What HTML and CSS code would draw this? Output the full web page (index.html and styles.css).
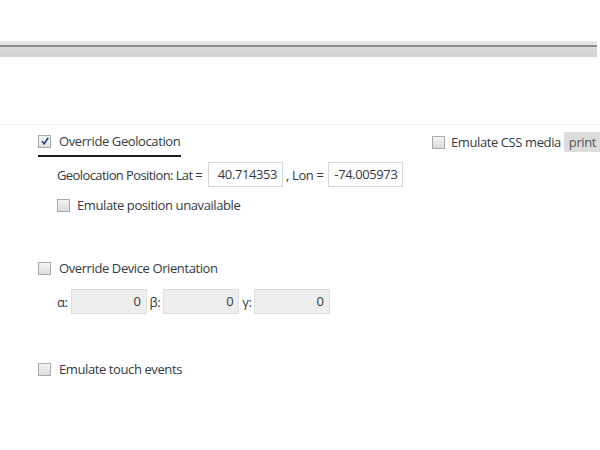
FILE: index.html
```html
<!DOCTYPE html>
<html>
<head>
<meta charset="utf-8">
<link rel="stylesheet" href="styles.css">
</head>
<body>
<div class="top-gap"></div>
<div class="bar"></div>
<div class="spacer"></div>
<div class="panel">
  <div class="main">
    <div class="row head">
      <span class="cb checked"><svg width="10" height="10" viewBox="0 0 10 10"><path d="M2 5.2 L4.2 7.6 L8.2 1.8" fill="none" stroke="#2b3a8f" stroke-width="1.6"/></svg></span>
      <span class="label">Override Geolocation</span>
    </div>
    <div class="underline"></div>
    <div class="row sub">
      <span class="label tight">Geolocation Position: Lat =</span>
      <span class="input lat">40.714353</span>
      <span class="label">, Lon =</span>
      <span class="input lon">-74.005973</span>
    </div>
    <div class="row sub2">
      <span class="cb"></span>
      <span class="label">Emulate position unavailable</span>
    </div>
    <div class="row head orient">
      <span class="cb"></span>
      <span class="label">Override Device Orientation</span>
    </div>
    <div class="row sub angles">
      <span class="label">α:</span>
      <span class="input gray">0</span>
      <span class="label">β:</span>
      <span class="input gray">0</span>
      <span class="label">γ:</span>
      <span class="input gray">0</span>
    </div>
    <div class="row head touch">
      <span class="cb"></span>
      <span class="label">Emulate touch events</span>
    </div>
  </div>
  <div class="side">
    <span class="cb"></span>
    <span class="label">Emulate CSS media</span>
    <span class="btn">print</span>
  </div>
</div>
</body>
</html>
```
FILE: styles.css
```css
html, body { margin: 0; padding: 0; background: #fff; }
body {
  font-family: "Open Sans", "Noto Sans", sans-serif;
  font-size: 13px;
  letter-spacing: -0.4px;
  color: #343a42;
  width: 600px;
  overflow: hidden;
}
.top-gap { height: 41px; }
.bar {
  height: 16px;
  width: 597px;
  background: linear-gradient(#e8e8e8 0, #e4e4e4 4px, #8e8e8e 4px, #8e8e8e 6px, #dadada 6px, #d2d2d2 16px);
}
.spacer { height: 67px; border-bottom: 1px solid #f0f0f0; }
.panel { display: flex; justify-content: space-between; }
.main { padding-left: 38px; padding-top: 9px; }
.row { display: flex; align-items: center; white-space: nowrap; }
.tight { letter-spacing: -0.6px; }
.cb {
  width: 11px; height: 11px;
  border: 1px solid #a9a9a9;
  background: linear-gradient(#f4f4f4, #dcdcdc);
  display: inline-flex; align-items: center; justify-content: center;
  flex: none;
}
.cb.checked { background: linear-gradient(#f6f6f6, #e0e0e0); }
.head .cb { margin-right: 8px; }
.head { height: 14px; }
.underline { width: 143px; height: 2px; background: #1a1a1a; margin-top: 7px; }
.sub { padding-left: 19px; margin-top: 5px; }
.input {
  display: inline-block;
  width: 68px; height: 23px; line-height: 23px;
  border: 1px solid #d8d8d8;
  text-align: right;
  padding-right: 5px;
  background: #fff;
}
.lat { margin-left: 6px; margin-right: 3px; }
.lon { margin-left: 5px; }
.sub2 { padding-left: 19px; margin-top: 9px; }
.sub2 .cb { margin-right: 7px; }
.orient { margin-top: 47px; }
.angles { margin-top: 14px; }
.angles .input { width: 69px; background: #eeeeee; border-color: #dedede; margin: 0 3px 0 3px; }
.angles .input:last-child { margin-left: 2px; }
.touch { margin-top: 48px; }
.side { display: flex; align-items: center; padding-top: 7px; height: 20px; margin-right: -1px; }
.side .cb { margin-right: 6px; }
.btn {
  display: inline-block;
  background: #dcdcdc;
  color: #555;
  height: 20px; line-height: 20px;
  padding: 0 5px 0 5px;
  margin-left: 3px;
}
```
